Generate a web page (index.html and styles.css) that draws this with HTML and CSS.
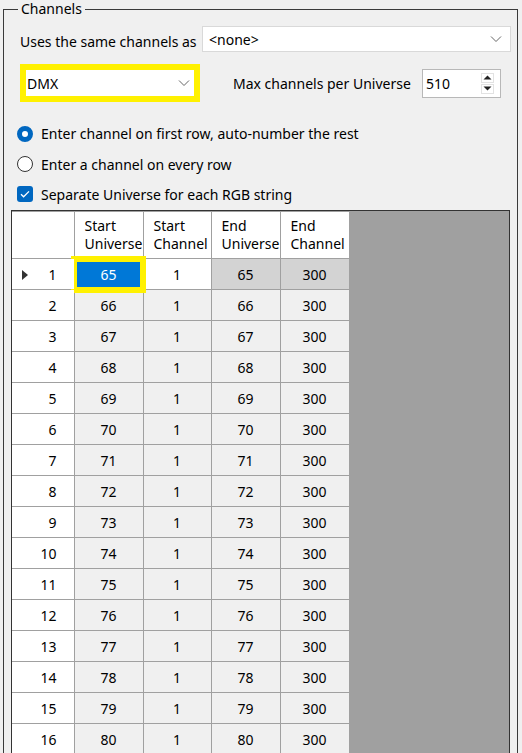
FILE: index.html
```html
<!DOCTYPE html>
<html lang="en">
<head>
  <meta charset="UTF-8">
  <title>Channels</title>
  <link rel="stylesheet" href="styles.css">
</head>
<body>
  <fieldset class="group">
    <legend>Channels</legend>

    <div class="line line-source">
      <span class="caption">Uses the same channels as</span>
      <div class="combo combo-wide">
        <span>&lt;none&gt;</span>
        <svg class="chevron" width="12" height="8" viewBox="0 0 12 8"><path d="M1 1.5 6 6.5 11 1.5" fill="none" stroke="#666" stroke-width="1"/></svg>
      </div>
    </div>

    <div class="line line-protocol">
      <div class="combo combo-protocol marked">
        <span>DMX</span>
        <svg class="chevron" width="12" height="8" viewBox="0 0 12 8"><path d="M1 1.5 6 6.5 11 1.5" fill="none" stroke="#666" stroke-width="1"/></svg>
      </div>
      <span class="caption caption-max">Max channels per Universe</span>
      <div class="spin">
        <span>510</span>
        <div class="spin-buttons">
          <span class="spin-btn"><svg width="9" height="5" viewBox="0 0 9 5"><path d="M0.5 4.5h8L4.5 0.5z" fill="#222"/></svg></span>
          <span class="spin-btn"><svg width="9" height="5" viewBox="0 0 9 5"><path d="M0.5 0.5h8L4.5 4.5z" fill="#222"/></svg></span>
        </div>
      </div>
    </div>

    <label class="option option-first">
      <span class="radio checked"></span>
      Enter channel on first row, auto-number the rest
    </label>
    <label class="option">
      <span class="radio"></span>
      Enter a channel on every row
    </label>
    <label class="option">
      <span class="check">
        <svg width="16" height="16" viewBox="0 0 16 16"><path d="M4 8.2 6.6 10.8 12 5.4" fill="none" stroke="#fff" stroke-width="1.3"/></svg>
      </span>
      Separate Universe for each RGB string
    </label>

    <div class="grid">
      <table id="channel-table">
        <colgroup>
          <col style="width: 62px">
          <col style="width: 69px">
          <col style="width: 68px">
          <col style="width: 69px">
          <col style="width: 69px">
        </colgroup>
        <thead>
          <tr>
            <th class="corner"></th>
            <th>Start<br>Universe</th>
            <th>Start<br>Channel</th>
            <th>End<br>Universe</th>
            <th>End<br>Channel</th>
          </tr>
        </thead>
        <tbody></tbody>
      </table>
    </div>
  </fieldset>

  <script>
    // fill the universe rows: each RGB string gets its own universe starting at 65
    const body = document.querySelector("#channel-table tbody");
    for (let i = 1; i <= 16; i++) {
      const uni = 64 + i;
      const tr = document.createElement("tr");
      if (i === 1) tr.className = "current";
      tr.innerHTML =
        '<td class="row-head">' + (i === 1 ? '<span class="pointer"></span>' : '') + i + '</td>' +
        '<td class="' + (i === 1 ? 'selected marked' : '') + '">' + uni + '</td>' +
        '<td>1</td>' +
        '<td>' + uni + '</td>' +
        '<td>300</td>';
      body.appendChild(tr);
    }
  </script>
</body>
</html>
```

FILE: styles.css
```css
/* Dialog base */
body {
  margin: 0;
  background: #f0f0f0;
  font-family: 'Noto Sans', 'Open Sans', sans-serif;
  font-size: 14px;
  color: #000;
  overflow: hidden;
  height: 753px;
}

.group {
  margin: 1px 4px 0 3px;
  padding: 0 7px;
  border: 1px solid #3a3a3a;
  border-bottom: none;
  min-width: 0;
  height: 760px;
}

.group legend {
  padding: 0 3px;
  margin-left: 7px;
  line-height: 16px;
}

.line {
  display: flex;
  align-items: center;
  margin-left: 9px;
}

.line-source {
  margin-top: 9px;
  height: 26px;
}

.caption {
  white-space: nowrap;
}

.line-source .caption {
  margin-top: 5px;
}

.combo {
  display: flex;
  align-items: center;
  justify-content: space-between;
  background: #fff;
  border: 1px solid #d9d9d9;
  box-sizing: border-box;
  padding: 0 8px 0 6px;
}

.combo-wide {
  margin-left: auto;
  margin-right: -1px;
  width: 309px;
  height: 26px;
}

.combo-protocol {
  width: 180px;
  height: 38px;
  padding-left: 1px;
  padding-right: 4px;
}

/* yellow call-out frame */
.marked {
  border: 6px solid #fff100;
}

.line-protocol {
  margin-top: 12px;
}

.caption-max {
  margin-left: 33px;
}

.spin {
  display: flex;
  align-items: center;
  justify-content: space-between;
  margin-left: auto;
  margin-right: 9px;
  width: 79px;
  height: 29px;
  box-sizing: border-box;
  border: 1px solid #b8b8b8;
  background: #fff;
  padding: 0 6px 0 3px;
}

.spin-buttons {
  display: flex;
  flex-direction: column;
  gap: 1px;
}

.spin-btn {
  display: flex;
  align-items: center;
  justify-content: center;
  width: 13px;
  height: 10px;
  border: 1px solid #e2e2e2;
  box-sizing: border-box;
}

.option {
  display: flex;
  align-items: center;
  margin-left: 9px;
  height: 30px;
  gap: 8px;
}

.option-first {
  margin-top: 16px;
  height: 31px;
}

.radio {
  width: 16px;
  height: 16px;
  border: 1px solid #333;
  border-radius: 50%;
  box-sizing: border-box;
  margin-left: -3px;
  background: #fff;
}

.radio.checked {
  border: 5px solid #0067c0;
}

.check {
  width: 16px;
  height: 16px;
  margin-left: -3px;
  border-radius: 3px;
  background: #0067c0;
  display: flex;
}

/* data grid */
.grid {
  margin-top: 1px;
  background: #a0a0a0;
  border: 1px solid #333;
  border-bottom: none;
  height: 600px;
}

.grid table {
  border-collapse: collapse;
  table-layout: fixed;
  width: 337px;
}

.grid th,
.grid td {
  border: 1px solid #a0a0a0;
  padding: 0;
}

.grid th {
  background: #fff;
  font-weight: normal;
  text-align: left;
  padding-left: 10px;
  height: 46px;
  line-height: 18px;
}

.grid th.corner {
  border-top: none;
  border-left: none;
}

.grid td {
  background: #f0f0f0;
  text-align: center;
  height: 30px;
}

.grid td.row-head {
  background: #fff;
  text-align: right;
  padding-right: 17px;
  border-left: none;
  position: relative;
}

.pointer {
  position: absolute;
  left: 10px;
  top: 11px;
  border-left: 6px solid #333;
  border-top: 5px solid transparent;
  border-bottom: 5px solid transparent;
}

.current td:nth-child(3) {
  background: #fff;
}

.current td:nth-child(4),
.current td:nth-child(5) {
  background: #d3d3d3;
}

.grid td.selected {
  background: #0078d7;
  color: #fff;
}

.grid td.marked {
  border: 1px solid #a0a0a0;
  outline: 6px solid #fff100;
  outline-offset: -3px;
}
```
